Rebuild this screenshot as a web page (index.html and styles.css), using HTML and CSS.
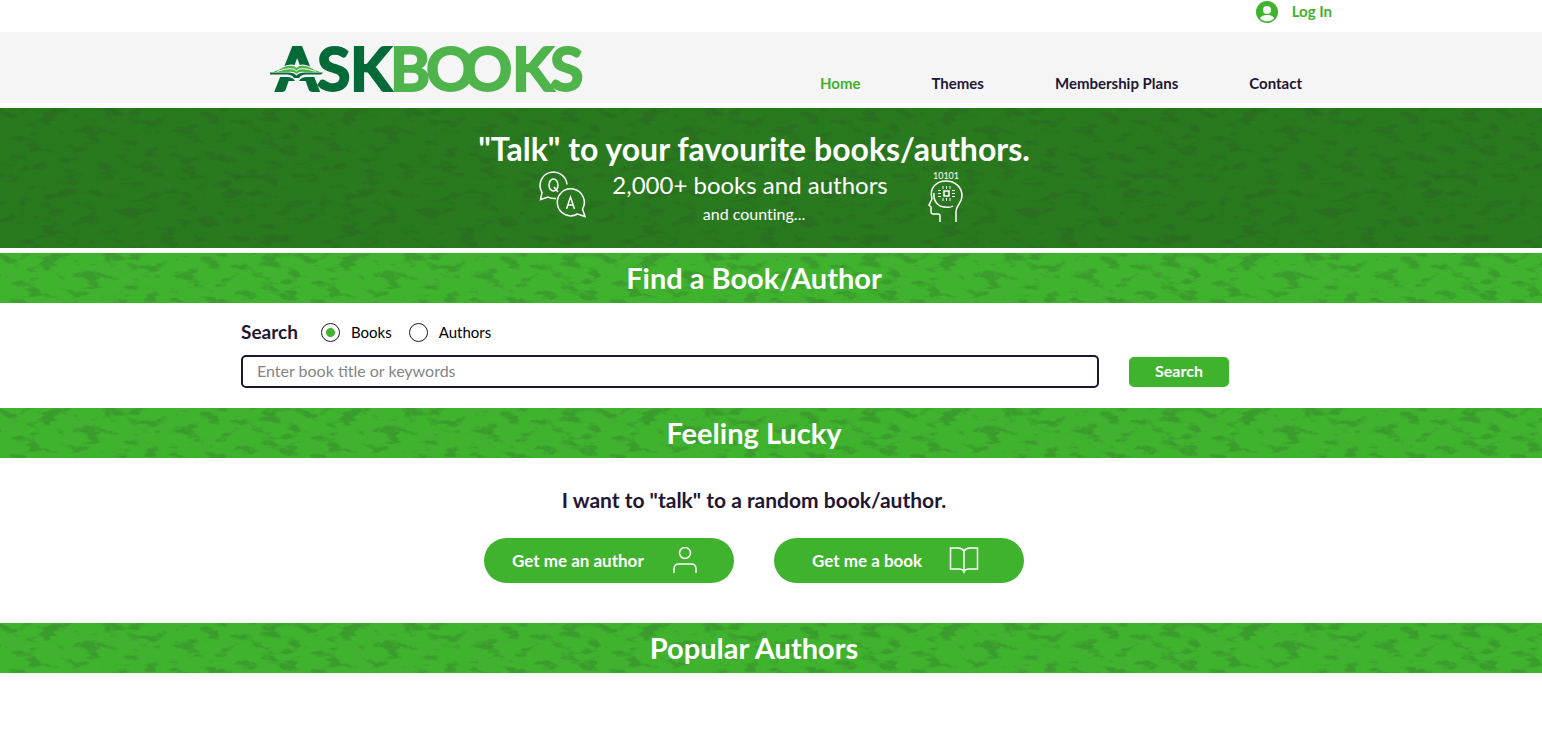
FILE: index.html
```html
<!DOCTYPE html>
<html lang="en">

<head>
    <meta charset="UTF-8">
    <meta name="viewport" content="width=device-width, initial-scale=1.0">
    <title>AskBooks</title>
    <link rel="stylesheet" href="styles.css">
</head>

<body>
    <!-- Login bar -->
    <div class="top-bar">
        <div class="wide-container">
            <button type="button" class="login-button">
                <svg width="22" height="22" viewBox="0 0 22 22" aria-hidden="true">
                    <circle cx="11" cy="11" r="11" fill="#3fb22e" />
                    <circle cx="11" cy="9" r="4" fill="#fff" />
                    <path d="M4 17.500C5 14.800 7.600 14 11 14s6 .8 7 3.500C16.200 19.400 13.700 20.300 11 20.300S5.800 19.400 4 17.500z" fill="#fff" />
                </svg>
                <span>Log In</span>
            </button>
        </div>
    </div>

    <!-- Logo and menu -->
    <header class="header">
        <div class="wide-container header-inner">
            <a href="#" class="logo" aria-label="AskBooks">
                <svg width="316" height="71" viewBox="0 0 316 71">
                    <g class="logo-text">
                        <text x="6 47 80" y="59" fill="#046a38" stroke="#046a38">ASK</text>
                        <text x="120 156 193 242 280" y="59" fill="#4eb44b" stroke="#4eb44b">BOOKS</text>
                    </g>
                    <path d="M0 40L14 34Q22 31 27 34Q32 31 39 34L48 38V45H37Q31 45 29 49H25Q23 45 17 45H6z" fill="#f5f5f5" />
                    <path d="M0 40.500H18Q24 40.500 26.500 43.500Q29 40.500 35 40.500H53L51 42.500H36Q31 42.500 29 46H24Q22 42.500 17 42.500H0z" fill="#046a38" />
                    <path d="M3 40Q9 38 14 35Q23 32 26.500 36Q30 32 39 35Q44 38 50 40H35Q29 39 26.500 42Q24 39 18 40z" fill="#4eb44b" />
                    <path d="M7 39.500Q23 34 26.500 39Q30 34 46 39.500" fill="none" stroke="#f5f5f5" stroke-width="1" />
                </svg>
            </a>
            <nav class="menu">
                <a href="#" class="active">Home</a>
                <a href="#">Themes</a>
                <a href="#">Membership Plans</a>
                <a href="#">Contact</a>
            </nav>
        </div>
    </header>

    <main>
        <!-- Hero -->
        <section class="hero">
            <h1>"Talk" to your favourite books/authors.</h1>
            <div class="hero-row">
                <svg width="48" height="48" viewBox="0 0 48 48" class="line-icon" aria-hidden="true">
                    <path d="M17 27.500Q12 28 9 26L1.500 28.500 3 21.500A13.500 13.500 0 1 1 28 13.500" />
                    <path d="M43.500 38A13.500 13.500 0 1 0 38.500 43L46 45.500z" />
                    <ellipse cx="14.500" cy="14" rx="4.500" ry="6" />
                    <path d="M15 16l4 5M27.500 38l4-12 4 12M29 34h5" />
                </svg>
                <div class="hero-text">
                    <p class="hero-count">2,000+ books and authors</p>
                    <p class="hero-note">and counting...</p>
                </div>
                <svg width="48" height="52" viewBox="-7 0 48 52" class="line-icon" aria-hidden="true">
                    <text x="18" y="8" class="bits">10101</text>
                    <path d="M12 51v-6q0-2-2-2H5q-2 0-2-3v-4l-2-2 3-6C1 16 9 10 18 10c9 0 16 6 16 15 0 7-6 9-6 16v10" />
                    <path d="M6 22c-1 8 4 14 11 14q5 1 8-1" />
                    <rect x="16" y="20" width="5" height="5" />
                    <path stroke-width="1" d="M15 15v3M18.500 15v3M22 15v3M15 27v3M18.500 27v3M22 27v3M10 19.500h3M10 22.500h3M10 25.500h3M24 19.500h3M24 22.500h3M24 25.500h3" />
                </svg>
            </div>
        </section>

        <h2 class="band">Find a Book/Author</h2>

        <!-- Search form -->
        <form class="search-form">
            <fieldset class="search-type">
                <legend>Search</legend>
                <label><input type="radio" name="type" value="books" checked> Books</label>
                <label><input type="radio" name="type" value="authors"> Authors</label>
            </fieldset>
            <div class="search-row">
                <input type="text" class="search-input" placeholder="Enter book title or keywords" aria-label="Enter book title or keywords">
                <button type="button" class="search-button">Search</button>
            </div>
        </form>

        <h2 class="band">Feeling Lucky</h2>

        <!-- Random pick -->
        <section class="lucky">
            <p>I want to "talk" to a random book/author.</p>
            <div class="lucky-buttons">
                <button type="button" class="pill author-pill">
                    <span>Get me an author</span>
                    <svg width="24" height="28" viewBox="0 0 24 28" class="line-icon" aria-hidden="true">
                        <circle cx="12" cy="6" r="5.500" />
                        <path d="M1 26v-4q0-5 5-5h12q5 0 5 5v4" />
                    </svg>
                </button>
                <button type="button" class="pill book-pill">
                    <span>Get me a book</span>
                    <svg width="30" height="28" viewBox="0 0 30 28" class="line-icon" aria-hidden="true">
                        <path d="M15 4Q13 1 9 1H1.500v21H10q4 0 5 3 1-3 5-3h8.500V1H21q-4 0-6 3zM15 4v21" />
                    </svg>
                </button>
            </div>
        </section>

        <h2 class="band">Popular Authors</h2>
    </main>
</body>

</html>
```

FILE: styles.css
```css
* {
    box-sizing: border-box;
}

body {
    margin: 0;
    background-color: #fff;
    color: #1f1633;
    font-family: Lato, "Open Sans", sans-serif;
    font-variant-ligatures: none;
}

h1,
h2,
p {
    margin: 0;
}

button {
    border: none;
    font-family: inherit;
    cursor: pointer;
}

/* The page column sits a little left of the middle */
.top-bar,
.header,
.hero,
.band,
.lucky {
    padding-right: 34px;
}

.wide-container {
    max-width: 1156px;
    margin: 0 auto;
}

/* Login bar */
.top-bar {
    height: 32px;
}

.top-bar .wide-container {
    display: flex;
    justify-content: flex-end;
}

.login-button {
    display: flex;
    align-items: center;
    gap: 14px;
    height: 24px;
    padding: 0;
    background: none;
    color: #3fb22e;
    font-size: 15px;
    line-height: 20px;
    font-weight: bold;
}

.login-button span {
    padding-bottom: 3px;
}

/* Header */
.header {
    background-color: #f5f5f5;
}

.header-inner {
    display: flex;
    justify-content: space-between;
    height: 71px;
    padding: 0 30px 0 94px;
}

.logo svg {
    display: block;
    overflow: visible;
}

.logo-text {
    font-size: 61px;
    font-weight: bold;
    stroke-width: 2;
}

.menu {
    display: flex;
    gap: 71px;
    padding-top: 42px;
    font-size: 15px;
    line-height: 18px;
    font-weight: bold;
}

.menu a {
    color: #1f1633;
    text-decoration: none;
}

.menu .active {
    color: #3fb22e;
}

/* Textured backgrounds */
.hero,
.band {
    background-image: url("data:image/svg+xml,%3Csvg xmlns='http://www.w3.org/2000/svg' width='300' height='300'%3E%3Cfilter id='n' x='0' y='0' width='100%25' height='100%25' color-interpolation-filters='sRGB'%3E%3CfeTurbulence type='fractalNoise' baseFrequency='.05 .11' numOctaves='5' seed='12' stitchTiles='stitch'/%3E%3CfeColorMatrix values='0 0 0 0 .15 0 0 0 0 .3 0 0 0 0 .13 6 0 0 0 -3.2'/%3E%3C/filter%3E%3Crect width='300' height='300' filter='url(%23n)' opacity='.22'/%3E%3C/svg%3E");
    color: #fff;
    text-align: center;
}

.hero {
    height: 140px;
    margin: 5px 0;
    padding-top: 22px;
    background-color: #29791e;
}

.hero h1 {
    font-size: 32px;
    line-height: 38px;
}

.hero-row {
    display: flex;
    justify-content: center;
}

.hero-row svg {
    margin-top: 3px;
}

.hero-text {
    width: 334px;
}

.hero-count {
    padding-right: 8px;
    font-size: 24px;
    line-height: 34px;
}

.hero-note {
    font-size: 16px;
    line-height: 24px;
}

.line-icon {
    flex: none;
    fill: none;
    stroke: #fff;
    stroke-width: 1.5;
}

.bits {
    fill: #fff;
    stroke: none;
    font-size: 9px;
    text-anchor: middle;
}

.band {
    height: 50px;
    background-color: #3fb22e;
    font-size: 29px;
    line-height: 50px;
}

/* Search form */
.search-form {
    max-width: 1060px;
    height: 105px;
    margin: 0 auto;
    padding: 16px 72px 0 0;
}

.search-type {
    display: flex;
    align-items: center;
    gap: 17px;
    height: 26px;
    margin: 0 0 10px;
    padding: 0;
    border: none;
}

.search-type legend {
    float: left;
    width: 63px;
    padding: 0;
    font-size: 19px;
    line-height: 26px;
    font-weight: bold;
}

.search-type label {
    display: flex;
    align-items: center;
    gap: 11px;
    color: #000;
    font-size: 15px;
}

.search-type input {
    appearance: none;
    width: 19px;
    height: 19px;
    margin: 0;
    border: 1px solid #1f1633;
    border-radius: 50%;
}

.search-type input:checked {
    background: radial-gradient(circle, #3fb22e 4px, #fff 5px);
}

.search-row {
    display: flex;
    align-items: center;
    gap: 30px;
}

.search-input {
    flex: 1;
    height: 33px;
    padding: 0 14px 2px;
    border: 2px solid #1f1633;
    border-radius: 5px;
    font-family: inherit;
    font-size: 16px;
}

.search-input::placeholder {
    color: #858585;
}

.search-button {
    width: 100px;
    height: 30px;
    margin-top: 1px;
    padding: 0 0 3px;
    border-radius: 5px;
    background-color: #3fb22e;
    color: #fff;
    font-size: 16px;
    font-weight: bold;
}

/* Random pick */
.lucky {
    height: 165px;
    padding-top: 28px;
}

.lucky p {
    font-size: 21px;
    line-height: 28px;
    font-weight: bold;
    text-align: center;
}

.lucky-buttons {
    display: flex;
    justify-content: center;
    gap: 40px;
    margin-top: 24px;
}

.pill {
    display: flex;
    align-items: center;
    justify-content: space-between;
    width: 250px;
    height: 45px;
    border-radius: 23px;
    background-color: #3fb22e;
    color: #fff;
    font-size: 17px;
    font-weight: bold;
}

.author-pill {
    padding: 0 37px 0 28px;
}

.book-pill {
    padding: 0 45px 0 38px;
}
```
